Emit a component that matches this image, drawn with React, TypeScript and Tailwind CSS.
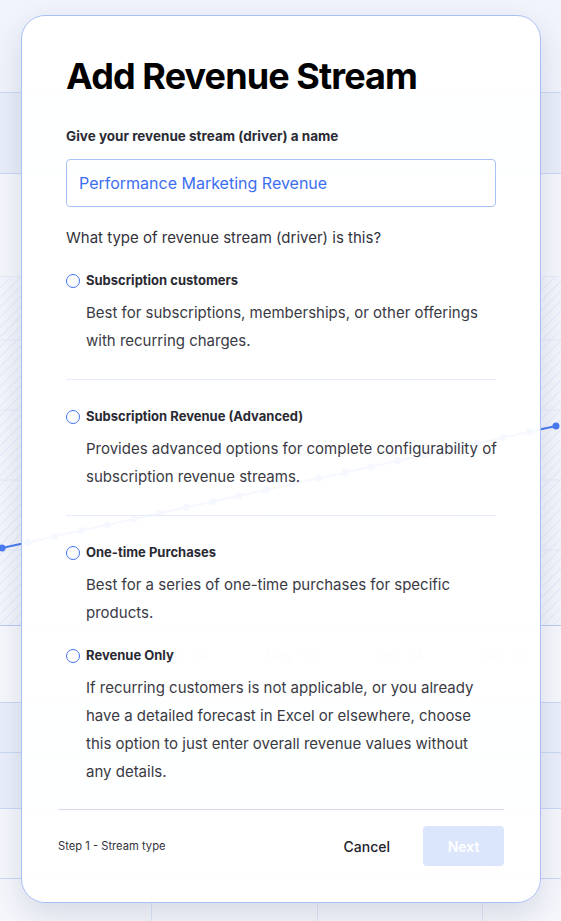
import React from 'react';

const options = [
  {
    title: 'Subscription customers',
    desc: 'Best for subscriptions, memberships, or other offerings with recurring charges.',
    wrap: 'pb-6 border-b border-[#e6ecfa]',
    descWrap: '',
  },
  {
    title: 'Subscription Revenue (Advanced)',
    desc: 'Provides advanced options for complete configurability of subscription revenue streams.',
    wrap: 'pt-[27px] pb-6 border-b border-[#e6ecfa]',
    descWrap: 'mr-[-6px]',
  },
  {
    title: 'One-time Purchases',
    desc: 'Best for a series of one-time purchases for specific products.',
    wrap: 'pt-[27px]',
    descWrap: '',
  },
  {
    title: 'Revenue Only',
    desc: 'If recurring customers is not applicable, or you already have a detailed forecast in Excel or elsewhere, choose this option to just enter overall revenue values without any details.',
    wrap: 'pt-[19px]',
    descWrap: '',
  },
];

function Chart() {
  // trend line points behind the modal
  const pts = Array.from({ length: 22 }, (_, i) => {
    const x = 2 + i * 26.38;
    const y = 271 - (i * 122) / 21;
    return [x, y];
  });
  return (
    <svg width="561" height="348" className="block">
      <defs>
        <pattern id="hatch" width="7" height="7" patternUnits="userSpaceOnUse" patternTransform="rotate(45)">
          <line x1="0" y1="0" x2="0" y2="7" stroke="#dbe3f9" strokeWidth="1.2" />
        </pattern>
      </defs>
      <rect width="561" height="348" fill="#f3f6fc" />
      <rect width="561" height="348" fill="url(#hatch)" />
      {[63, 133, 203, 273].map((y) => (
        <line key={y} x1="0" x2="561" y1={y} y2={y} stroke="#e4eaf9" strokeWidth="1" />
      ))}
      <polyline
        points={pts.map((p) => p.join(',')).join(' ')}
        fill="none"
        stroke="#4b7bf0"
        strokeWidth="2"
      />
      {pts.map(([x, y], i) => (
        <circle key={i} cx={x} cy={y} r="3.5" fill="#4b7bf0" />
      ))}
    </svg>
  );
}

export default function App() {
  return (
    <div className="relative w-[561px] h-[921px] overflow-hidden bg-[#f1f4fc] font-['Inter',sans-serif]">
      {/* Page behind the dialog */}
      <div className="flex flex-col">
        <div className="h-[93px] bg-[#f1f4fc] border-b border-[#cbd8f7]" />
        <div className="h-[81px] bg-[#e9eefa] border-b border-[#cbd8f7]" />
        <div className="h-[103px] bg-[#f5f7fc] border-b border-[#e6ecfa]" />
        <div className="h-[349px] border-b border-[#b9cbf5]">
          <Chart />
        </div>
        <div className="h-[77px] bg-[#f6f8fc] border-b border-[#cbd8f7] flex items-start pt-[18px] pl-[131px] text-[14px] text-[#c3cbdf]">
          {["Jan '24", "May '24", "Sep '24", "Jan '25"].map((m) => (
            <div key={m} className="w-[107px] text-center">{m}</div>
          ))}
        </div>
        <div className="h-[50px] bg-[#eaeffa] border-b border-[#cbd8f7]" />
        <div className="h-[56px] bg-[#eaeffa] border-b border-[#cbd8f7]" />
        <div className="h-[70px] bg-[#f5f7fc] border-b border-[#cbd8f7] grid grid-cols-[152px_166px_165px_1fr]">
          <div className="border-r border-[#dde5f8]" />
          <div className="border-r border-[#dde5f8]" />
          <div className="border-r border-[#dde5f8]" />
          <div />
        </div>
        <div className="h-[42px] bg-[#f5f7fc] grid grid-cols-[152px_166px_165px_1fr]">
          <div className="border-r border-[#dde5f8]" />
          <div className="border-r border-[#dde5f8]" />
          <div className="border-r border-[#dde5f8]" />
          <div />
        </div>
      </div>

      {/* Dialog */}
      <div className="absolute left-[21px] top-[15px] w-[520px] h-[888px] rounded-[24px] border border-[#a9c0f5] bg-white/95 shadow-[0_12px_32px_rgba(30,40,80,0.14)] flex flex-col">
        <div className="flex-1 px-[44px] pt-[42px]">
          <h1 className="text-[36px] leading-none font-bold tracking-tight text-black">Add Revenue Stream</h1>
          <p className="mt-[32px] text-[13.5px] leading-5 font-bold text-[#2b2b36]">
            Give your revenue stream (driver) a name
          </p>
          <div className="mt-[13px] h-12 rounded border border-[#a9c1f7] px-3 flex items-center text-[16px] text-[#3c6ef0]">
            Performance Marketing Revenue
          </div>
          <p className="mt-[21px] text-[15px] leading-5 text-[#33333d]">What type of revenue stream (driver) is this?</p>

          <div className="mt-[23px] flex flex-col">
            {options.map((o) => (
              <div key={o.title} className={o.wrap}>
                <div className="h-5 flex items-center gap-1.5">
                  <span className="w-[14px] h-[14px] rounded-full border-[1.5px] border-[#4373f0] bg-white" />
                  <span className="text-[13px] font-bold text-[#2a2a33]">{o.title}</span>
                </div>
                <p className={`mt-2 pl-5 text-[15px] leading-7 text-[#3a3a44] ${o.descWrap}`}>{o.desc}</p>
              </div>
            ))}
          </div>
        </div>

        {/* Footer */}
        <div className="px-9">
          <div className="border-t border-[#d9dbe6] pt-4 pb-9 flex items-center justify-between">
            <span className="text-[11.2px] text-[#33333d]">Step 1 - Stream type</span>
            <div className="flex items-center gap-[33px]">
              <button className="text-[14px] font-medium text-[#22222b]">Cancel</button>
              <button className="w-[81px] h-10 rounded bg-[#dbe5fb] text-[14px] font-semibold text-white">Next</button>
            </div>
          </div>
        </div>
      </div>
    </div>
  );
}
